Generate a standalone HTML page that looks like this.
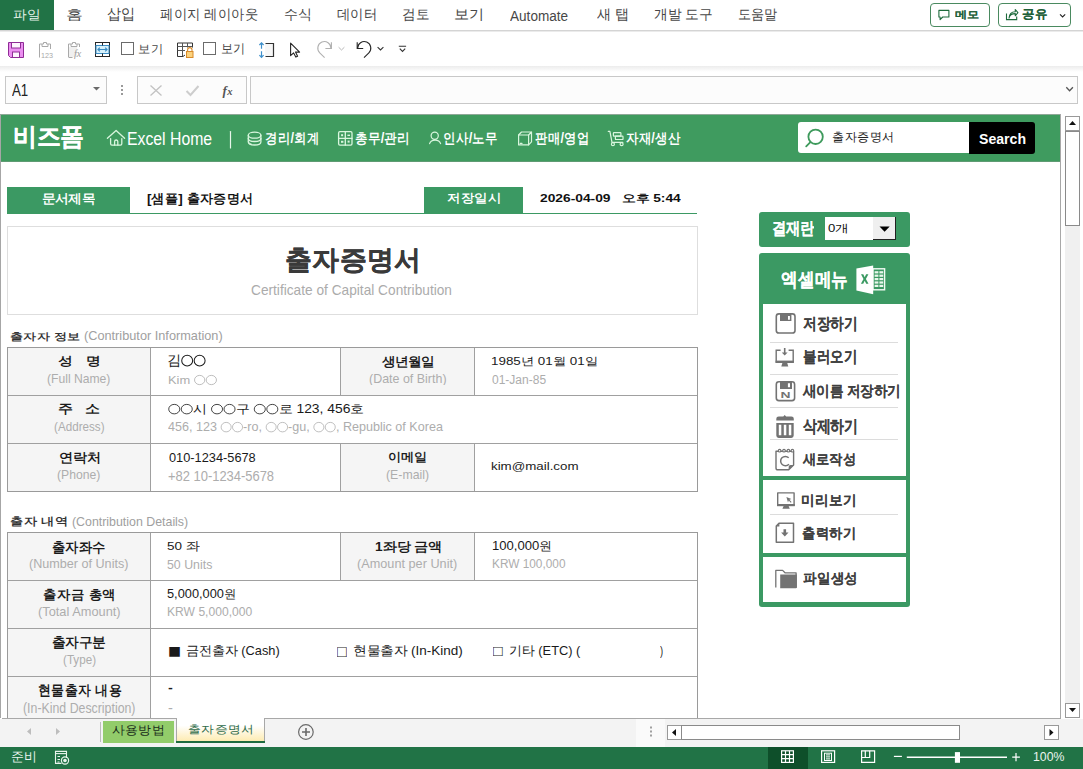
<!DOCTYPE html>
<html><head><meta charset="utf-8"><style>
html,body{margin:0;padding:0;width:1083px;height:769px;overflow:hidden;background:#fff;font-family:"Liberation Sans",sans-serif;position:relative}
</style></head><body>
<div style="position:absolute;left:0px;top:0px;width:54px;height:30px;background:#217346;"></div><div style="position:absolute;left:0px;top:30px;width:1083px;height:1px;background:#d4d4d4;"></div><div style="position:absolute;left:0px;top:31px;width:1083px;height:1px;background:#ebebeb;"></div><div style="position:absolute;left:0;top:66px;width:1083px;height:6px;background:linear-gradient(#ececec,#fff)"></div><div style="position:absolute;left:930px;top:3px;width:60px;height:24px;background:#fff;border:1px solid #4a8a60;box-sizing:border-box;border-radius:4px;"></div><div style="position:absolute;left:998px;top:3px;width:73px;height:24px;background:#fff;border:1px solid #4a8a60;box-sizing:border-box;border-radius:4px;"></div><div style="position:absolute;left:5px;top:76px;width:102px;height:28px;background:#fcfcfc;border:1px solid #c8c8c8;box-sizing:border-box;"></div><div style="position:absolute;left:137px;top:76px;width:110px;height:28px;background:#fcfcfc;border:1px solid #c8c8c8;box-sizing:border-box;"></div><div style="position:absolute;left:250px;top:76px;width:828px;height:28px;background:#fcfcfc;border:1px solid #c8c8c8;box-sizing:border-box;"></div><div style="position:absolute;left:0px;top:114px;width:1px;height:604px;background:#a6a6a6;"></div><div style="position:absolute;left:1px;top:114px;width:1059px;height:48px;background:#3f9b5f;"></div><div style="position:absolute;left:0px;top:114px;width:1060px;height:1px;background:#8fa898;"></div><div style="position:absolute;left:1px;top:161px;width:1059px;height:1px;background:#5f9b73;"></div><div style="position:absolute;left:1060px;top:114px;width:1px;height:604px;background:#a8a8a8;"></div><div style="position:absolute;left:2px;top:718px;width:1059px;height:1px;background:#a8a8a8;"></div><div style="position:absolute;left:1065px;top:116px;width:15px;height:602px;background:#f0f0f0;"></div><div style="position:absolute;left:1065px;top:116px;width:15px;height:15px;background:#fff;border:1px solid #999;box-sizing:border-box;"></div><div style="position:absolute;left:1065px;top:131px;width:15px;height:95px;background:#fff;border:1px solid #8a8a8a;box-sizing:border-box;"></div><div style="position:absolute;left:1065px;top:703px;width:15px;height:15px;background:#fff;border:1px solid #999;box-sizing:border-box;"></div><div style="position:absolute;left:0px;top:719px;width:1083px;height:28px;background:#f3f3f3;"></div><div style="position:absolute;left:0px;top:747px;width:1083px;height:22px;background:#217346;"></div><div style="position:absolute;left:636px;top:719px;width:29px;height:28px;background:#fafafa;"></div><div style="position:absolute;left:7px;top:187px;width:123px;height:26px;background:#3b9963;"></div><div style="position:absolute;left:424px;top:187px;width:99px;height:26px;background:#3b9963;"></div><div style="position:absolute;left:7px;top:213px;width:690px;height:1px;background:#3b9963;"></div><div style="position:absolute;left:7px;top:226px;width:691px;height:89px;background:#fff;border:1px solid #dedede;box-sizing:border-box;"></div><div style="position:absolute;left:7px;top:347px;width:691px;height:145px;background:#fff;border:1px solid #9a9a9a;box-sizing:border-box;"></div><div style="position:absolute;left:8px;top:348px;width:142px;height:143px;background:#f5f5f5;"></div><div style="position:absolute;left:341px;top:348px;width:133px;height:47px;background:#f5f5f5;"></div><div style="position:absolute;left:341px;top:444px;width:133px;height:47px;background:#f5f5f5;"></div><div style="position:absolute;left:8px;top:395px;width:689px;height:1px;background:#a0a0a0;"></div><div style="position:absolute;left:8px;top:443px;width:689px;height:1px;background:#a0a0a0;"></div><div style="position:absolute;left:150px;top:348px;width:1px;height:143px;background:#a0a0a0;"></div><div style="position:absolute;left:340px;top:348px;width:1px;height:47px;background:#a0a0a0;"></div><div style="position:absolute;left:474px;top:348px;width:1px;height:47px;background:#a0a0a0;"></div><div style="position:absolute;left:340px;top:444px;width:1px;height:47px;background:#a0a0a0;"></div><div style="position:absolute;left:474px;top:444px;width:1px;height:47px;background:#a0a0a0;"></div><div style="position:absolute;left:7px;top:532px;width:691px;height:186px;background:#fff;"></div><div style="position:absolute;left:7px;top:532px;width:1px;height:186px;background:#9a9a9a;"></div><div style="position:absolute;left:697px;top:532px;width:1px;height:186px;background:#9a9a9a;"></div><div style="position:absolute;left:7px;top:532px;width:691px;height:1px;background:#9a9a9a;"></div><div style="position:absolute;left:8px;top:533px;width:142px;height:185px;background:#f5f5f5;"></div><div style="position:absolute;left:341px;top:533px;width:133px;height:47px;background:#f5f5f5;"></div><div style="position:absolute;left:8px;top:580px;width:689px;height:1px;background:#a0a0a0;"></div><div style="position:absolute;left:8px;top:628px;width:689px;height:1px;background:#a0a0a0;"></div><div style="position:absolute;left:8px;top:676px;width:689px;height:1px;background:#a0a0a0;"></div><div style="position:absolute;left:150px;top:533px;width:1px;height:185px;background:#a0a0a0;"></div><div style="position:absolute;left:340px;top:533px;width:1px;height:47px;background:#a0a0a0;"></div><div style="position:absolute;left:474px;top:533px;width:1px;height:47px;background:#a0a0a0;"></div><div style="position:absolute;left:759px;top:212px;width:151px;height:35px;background:#3b9963;border-radius:3px;"></div><div style="position:absolute;left:825px;top:217px;width:48px;height:23px;background:#fff;"></div><div style="position:absolute;left:873px;top:217px;width:23px;height:23px;background:#efefef;border-right:1px solid #222;border-bottom:1px solid #222;box-sizing:border-box;"></div><div style="position:absolute;left:759px;top:253px;width:151px;height:354px;background:#3b9963;border-radius:3px;"></div><div style="position:absolute;left:763px;top:304px;width:143px;height:172px;background:#fff;"></div><div style="position:absolute;left:763px;top:480px;width:143px;height:73px;background:#fff;"></div><div style="position:absolute;left:763px;top:557px;width:143px;height:45px;background:#fff;"></div><div style="position:absolute;left:770px;top:342px;width:128px;height:1px;background:#dcdcdc;"></div><div style="position:absolute;left:770px;top:374px;width:128px;height:1px;background:#dcdcdc;"></div><div style="position:absolute;left:770px;top:407px;width:128px;height:1px;background:#dcdcdc;"></div><div style="position:absolute;left:770px;top:439px;width:128px;height:1px;background:#dcdcdc;"></div><div style="position:absolute;left:770px;top:514px;width:128px;height:1px;background:#dcdcdc;"></div><div style="position:absolute;left:103px;top:721px;width:71px;height:22px;background:#92cc6a;"></div><div style="position:absolute;left:176px;top:718px;width:89px;height:25px;box-sizing:border-box;border-left:1px solid #a8a8a8;border-right:1px solid #a8a8a8;background:linear-gradient(#fff 30%,#fde9a8)"></div><div style="position:absolute;left:176px;top:741px;width:89px;height:2px;background:#1e6b3f;"></div><div style="position:absolute;left:100px;top:722px;width:1px;height:20px;background:#bdbdbd;"></div><div style="position:absolute;left:667px;top:725px;width:15px;height:15px;background:#fff;border:1px solid #999;box-sizing:border-box;"></div><div style="position:absolute;left:681px;top:725px;width:279px;height:15px;background:#fff;border:1px solid #8a8a8a;box-sizing:border-box;"></div><div style="position:absolute;left:1044px;top:725px;width:15px;height:15px;background:#fff;border:1px solid #999;box-sizing:border-box;"></div><div style="position:absolute;left:768px;top:747px;width:40px;height:22px;background:#0e4f2a;"></div><!-- ribbon buttons icons -->
<svg style="position:absolute;left:0;top:0" width="1083" height="769" viewBox="0 0 1083 769">
<g fill="none" stroke="#1e6b3c" stroke-width="1.1">
 <path d="M938.9 10.4h10v6.6h-6.2l-2.6 2.6v-2.6h-1.2z" stroke-linejoin="round"/>
 <path d="M1006.5 13.5v6.1h10.2v-3.2"/>
 <path d="M1009 18.2c0.5-3.2 2.4-4.6 6.3-4.6v2.2l2.6-3.2-2.6-3.1v2.2c-4.1 0-6 2.4-6.3 6.5z" stroke-linejoin="round"/>
 <path d="M1060 14.3l2.6 2.6 2.6-2.6" stroke="#222" stroke-width="1.1"/>
</g>
<!-- QAT save -->
<path d="M8.5 42.5h15v15h-13l-2-2z" fill="#eb8ff0" stroke="#8f2c96" stroke-width="1"/>
<rect x="11.5" y="42.5" width="9" height="5.5" fill="#fdf3fd" stroke="#8f2c96" stroke-width="1"/>
<rect x="12.5" y="52" width="7" height="5.5" fill="#fdf3fd" stroke="#8f2c96" stroke-width="1"/>
<!-- paste values -->
<g fill="none" stroke="#a9a9a9" stroke-width="1">
 <path d="M39.5 57.5v-13.5h2.5M48 44h2.5v5"/>
 <path d="M42 46.5h6v-2.5h-1.5v-1.5h-3v1.5h-1.5z"/>
</g>
<text x="41" y="57.6" font-family="Liberation Sans" font-size="7.6" fill="#a9a9a9" textLength="12" lengthAdjust="spacingAndGlyphs">123</text>
<!-- paste formula -->
<g fill="none" stroke="#a9a9a9" stroke-width="1">
 <path d="M68.5 57.5v-13.5h2.5M77 44h2.5v3"/>
 <path d="M71 46.5h6v-2.5h-1.5v-1.5h-3v1.5h-1.5z"/>
 <path d="M69 57.5h3.5"/>
</g>
<rect x="69" y="47" width="8" height="10" fill="#f0f0f0"/>
<text x="74" y="57" font-family="Liberation Serif" font-style="italic" font-size="10" fill="#9a9a9a">fx</text>
<!-- column width -->
<rect x="95.5" y="42.5" width="14" height="14" fill="#fff" stroke="#262626" stroke-width="1"/>
<rect x="96" y="45.5" width="13" height="8" fill="#d7f1fb" stroke="#3a8cc4" stroke-width="1"/>
<path d="M102.5 43v2.5M102.5 53.5v3" stroke="#262626" stroke-width="1"/>
<path d="M98 49.5h9M99.8 47.7l-1.8 1.8 1.8 1.8M105.2 47.7l1.8 1.8-1.8 1.8" fill="none" stroke="#3a8cc4" stroke-width="1.2"/>
<!-- checkboxes -->
<rect x="121.5" y="42.5" width="12" height="12" fill="#fff" stroke="#6b6b6b" stroke-width="1"/>
<rect x="203.5" y="42.5" width="12" height="12" fill="#fff" stroke="#6b6b6b" stroke-width="1"/>
<!-- table lock -->
<g fill="none" stroke="#333" stroke-width="1">
 <path d="M177.5 56.5v-13.5h15v4.5"/>
 <path d="M177.5 56.5h5.5l2-1.5"/>
 <path d="M177.5 46.5h15M177.5 50.5h7.5M182.5 43v13M187.5 43v4.5" stroke="#555"/>
</g>
<path d="M187.6 51v-1.2a2.2 2.2 0 0 1 4.4 0v1.2" fill="none" stroke="#d88a2a" stroke-width="1.1"/>
<rect x="186.5" y="51.5" width="6.5" height="6" fill="#fcd27c" stroke="#d88a2a" stroke-width="1"/>
<!-- row height -->
<rect x="265" y="43.5" width="8.5" height="13" fill="#f7f7f7"/>
<path d="M265.5 43.5h8v13h-8" fill="none" stroke="#333" stroke-width="1.2"/>
<path d="M261.5 42.8v6M261.5 51.2v6M259.4 45l2.1-2.1 2.1 2.1M259.4 55.2l2.1 2.1 2.1-2.1" fill="none" stroke="#3d8fcb" stroke-width="1.2"/>
<!-- cursor -->
<path d="M290.6 43.2v12.5l3-2.8 2.2 4.2 1.8-0.9-2.1-4.1h4.1z" fill="#fff" stroke="#262626" stroke-width="1.1" stroke-linejoin="round"/>
<!-- redo -->
<path d="M331 48.2A6.6 6.6 0 1 0 319.73 52.87L324.6 57.6" fill="none" stroke="#b0b0b0" stroke-width="1.1"/>
<path d="M331.4 42.3v6.2h-6" fill="none" stroke="#b0b0b0" stroke-width="1.1"/>
<path d="M338.6 47.2l2.9 2.8 2.9-2.8" fill="none" stroke="#b8b8b8" stroke-width="1"/>
<!-- undo -->
<path d="M357.6 48.2A6.6 6.6 0 1 1 368.87 52.87L364 57.6" fill="none" stroke="#262626" stroke-width="1.1"/>
<path d="M357.2 42.3v6.2h6" fill="none" stroke="#262626" stroke-width="1.1"/>
<path d="M377.6 47.2l2.9 2.8 2.9-2.8" fill="none" stroke="#333" stroke-width="1.1"/>
<!-- customize -->
<path d="M398.8 46.3h7.3M399.8 48.6l2.7 2.8 2.7-2.8" fill="none" stroke="#333" stroke-width="1.1"/>
<!-- name box arrow -->
<path d="M93 87h7l-3.5 3.6z" fill="#6a6a6a"/>
<!-- dots -->
<g fill="#9a9a9a"><rect x="121" y="85" width="2" height="2"/><rect x="121" y="89" width="2" height="2"/><rect x="121" y="93" width="2" height="2"/></g>
<!-- X check fx -->
<path d="M150.5 85.5l11 10M161.5 85.5l-11 10" stroke="#c2c2c2" stroke-width="1.3"/>
<path d="M186.5 91l4 4 8-9" fill="none" stroke="#cdcdcd" stroke-width="2"/>
<text x="222.5" y="94.5" font-family="Liberation Serif" font-style="italic" font-weight="bold" font-size="13" fill="#555">f</text>
<text x="227.2" y="95" font-family="Liberation Serif" font-style="italic" font-weight="bold" font-size="10.5" fill="#555">x</text>
<!-- formula chevron -->
<path d="M1066.3 87.3l3.3 3.5 3.3-3.5" fill="none" stroke="#555" stroke-width="1.3"/>
</svg>
<svg style="position:absolute;left:0;top:0" width="1083" height="769" viewBox="0 0 1083 769">
<g fill="none" stroke="#d9f6de" stroke-width="1.3" stroke-linecap="round" stroke-linejoin="round">
 <!-- house -->
 <path d="M107.4 138.3L116.1 130.4L124.6 138.3"/>
 <path d="M110.6 138.6v5.2a1.3 1.3 0 0 0 1.3 1.3h8.6a1.3 1.3 0 0 0 1.3-1.3v-5.2"/>
 <path d="M114.6 145v-3.4a1.6 1.6 0 0 1 3.2 0v3.4"/>
 <!-- separator -->
 <path d="M230.5 131.5v16.5" stroke="#e8f6ea" stroke-width="1.2"/>
 <!-- db -->
 <ellipse cx="254.6" cy="135.2" rx="6.3" ry="3"/>
 <path d="M248.3 135.2v6.8c0 1.7 2.8 3 6.3 3s6.3-1.3 6.3-3v-6.8"/>
 <path d="M248.3 138.5c0 1.7 2.8 3 6.3 3s6.3-1.3 6.3-3" />
 <path d="M248.3 141.7c0 1.0 1.3 1.8 3 2.3" stroke-width="1"/>
 <!-- grid -->
 <rect x="338.6" y="131.7" width="13.4" height="13.4" rx="1.3"/>
 <path d="M345.3 132v13M339 138.4h13"/>
</g>
<g fill="#d9f6de">
 <rect x="341.1" y="134.2" width="2" height="2"/>
 <rect x="347.4" y="134.6" width="2.6" height="1.4"/>
 <rect x="341.0" y="140.8" width="2.4" height="2"/>
 <rect x="347.6" y="140.6" width="2" height="2"/>
</g>
<g fill="none" stroke="#d9f6de" stroke-width="1.2" stroke-linecap="round" stroke-linejoin="round">
 <!-- person -->
 <circle cx="434.7" cy="135.7" r="3.6"/>
 <path d="M429.6 143.6a5.7 4.8 0 0 1 11 0"/>
 <!-- box -->
 <path d="M518.6 135h10v9.9h-10z"/>
 <path d="M518.6 135l2.9-3h10v9.9l-2.9 3M528.6 135l2.9-3"/>
 <path d="M520.2 143.4h1.8"/>
 <!-- cart -->
 <path d="M608.3 131.4h1.6l2.1 10.9h10.8"/>
 <rect x="613.4" y="132.7" width="7.5" height="3.5" rx="0.6"/>
 <rect x="615.4" y="136.2" width="7.6" height="3.3" rx="0.6"/>
 <circle cx="612.9" cy="144.2" r="1.5"/>
 <circle cx="621.6" cy="144.2" r="1.5"/>
</g>
</svg>
<!-- search box -->
<div style="position:absolute;left:798px;top:122px;width:172px;height:31px;background:#fff;border-radius:3px 0 0 3px"></div>
<div style="position:absolute;left:969px;top:122px;width:66px;height:32px;background:#000;border-radius:0 3px 3px 0"></div>
<svg style="position:absolute;left:0;top:0" width="1083" height="769" viewBox="0 0 1083 769">
 <circle cx="815.6" cy="136.8" r="7.2" fill="none" stroke="#3e9a5c" stroke-width="1.8"/>
 <path d="M810.4 142.2l-4.2 4.2" stroke="#3e9a5c" stroke-width="1.8" stroke-linecap="round"/>
</svg>
<svg style="position:absolute;left:0;top:0" width="1083" height="769" viewBox="0 0 1083 769">
 <!-- dropdown arrow -->
 <path d="M879.5 226.6h10.2l-5.1 5.2z" fill="#000"/>
 <!-- excel logo -->
 <rect x="873" y="268.8" width="11.6" height="21" fill="none" stroke="#f2fbf4" stroke-width="1.4"/>
 <g fill="#e9f7ec">
  <rect x="874.6" y="271.2" width="3.8" height="2.2"/><rect x="879.4" y="271.2" width="3.8" height="2.2"/>
  <rect x="874.6" y="274.6" width="3.8" height="2.2"/><rect x="879.4" y="274.6" width="3.8" height="2.2"/>
  <rect x="874.6" y="278.0" width="3.8" height="2.2"/><rect x="879.4" y="278.0" width="3.8" height="2.2"/>
  <rect x="874.6" y="281.4" width="3.8" height="2.2"/><rect x="879.4" y="281.4" width="3.8" height="2.2"/>
  <rect x="874.6" y="284.8" width="3.8" height="2.2"/><rect x="879.4" y="284.8" width="3.8" height="2.2"/>
 </g>
 <path d="M856.4 268.6L873.2 265.6V294.2L856.4 290.4z" fill="#fff"/>
 <path d="M861 274.3h2.3l1.4 2.9 1.4-2.9h2.3l-2.5 4.6 2.6 4.8h-2.3l-1.5-3-1.5 3h-2.3l2.6-4.8z" fill="#3b9a62"/>
 <!-- menu icons -->
 <g fill="none" stroke="#737373" stroke-width="1.6">
  <rect x="776.3" y="313.9" width="18.7" height="19.1" rx="2.6"/>
  <rect x="776.3" y="381.8" width="18.3" height="18.8" rx="2.6"/>
 </g>
 <path d="M780 313.5h11.4v7.5H780z M788 316v3.8h1.9V316z" fill="#737373" fill-rule="evenodd"/>
 <path d="M780 381.2h12v7.7h-12z M787.9 383.2v4h2.1v-4z" fill="#737373" fill-rule="evenodd"/>
 <text x="780.4" y="398.2" font-family="Liberation Sans" font-weight="bold" font-size="8.8" fill="#737373" textLength="10" lengthAdjust="spacingAndGlyphs">N</text>
 <!-- load monitor -->
 <path d="M780.6 350.2h-4.4v12h17v-12h-4.6" fill="none" stroke="#737373" stroke-width="1.4"/>
 <rect x="775.6" y="360.6" width="18.2" height="2" fill="#737373"/>
 <path d="M781.3 366.4l1.2-4h4.6l1.2 4z" fill="#737373"/>
 <path d="M784.7 348v5" stroke="#737373" stroke-width="1.6"/>
 <path d="M781.8 352.4h5.8l-2.9 3.2z" fill="#737373"/>
 <!-- trash -->
 <path d="M776.3 420.6v-1.8a2.4 2.4 0 0 1 2.4-2.4h4.6l1.4-1.3 1.4 1.3h5.3a2.4 2.4 0 0 1 2.4 2.4v1.8z" fill="#737373"/>
 <path d="M776.3 423h17.4v12.6a2.4 2.4 0 0 1-2.4 2.4h-12.6a2.4 2.4 0 0 1-2.4-2.4z M778.8 424.8v10.4h2.5v-10.4z M783.8 424.8v10.4h2.5v-10.4z M788.8 424.8v10.4h2.5v-10.4z" fill="#737373" fill-rule="evenodd"/>
 <!-- new doc -->
 <path d="M776 451.3h17.6v13.6l-4.9 4.9h-10.8a1.9 1.9 0 0 1-1.9-1.9z" fill="none" stroke="#737373" stroke-width="1.4" stroke-linejoin="round"/>
 <path d="M793.6 464.9l-4.9 4.9v-3a1.9 1.9 0 0 1 1.9-1.9z" fill="#737373"/>
 <g fill="#fff" stroke="#737373" stroke-width="1.1"><circle cx="779.6" cy="450.7" r="1.3"/><circle cx="784" cy="450.7" r="1.3"/><circle cx="788.4" cy="450.7" r="1.3"/><circle cx="792.4" cy="450.7" r="1.3"/></g>
 <path d="M788.7 457.8a4.7 4.7 0 1 0 0.2 6.4" fill="none" stroke="#737373" stroke-width="1.5"/>
 <!-- preview monitor -->
 <path d="M777.7 492.9h16.4v12.3h-16.4z" fill="none" stroke="#737373" stroke-width="1.4" stroke-linejoin="round"/>
 <rect x="777" y="504" width="17.8" height="2.2" fill="#737373"/>
 <path d="M782.4 508.8l1.2-2.8h5l1.2 2.8z" fill="#737373"/>
 <path d="M786.4 497l5 2.1-2 0.7 2.2 2.1-0.8 0.8-2.1-2.2-0.7 2z" fill="#737373"/>
 <!-- print doc -->
 <path d="M779 523.3h14.5v18.9h-17.2v-16.2z" fill="none" stroke="#737373" stroke-width="1.5" stroke-linejoin="round"/>
 <path d="M776 526.6l3.4-3.4v3.4z" fill="#737373"/>
 <path d="M783.5 529.2h2.6v3.4h2.4l-3.7 4-3.7-4h2.4z" fill="#737373"/>
 <!-- folder -->
 <path d="M775.8 587.6v-17.2h6.8l2.4 2.4h11.1v15" fill="none" stroke="#737373" stroke-width="1.3" stroke-linejoin="round"/>
 <path d="M780.2 574.4h16.7v12.8a1 1 0 0 1-1 1h-15.7z" fill="#737373"/>
</svg>
<svg style="position:absolute;left:0;top:0" width="1083" height="769" viewBox="0 0 1083 769">
 <!-- v scroll arrows -->
 <path d="M1069 125h7l-3.5-4z" fill="#111"/>
 <path d="M1069 708h7l-3.5 4z" fill="#111"/>
 <!-- h scroll arrows -->
 <path d="M672 732.5l4-3.5v7z" fill="#111"/>
 <path d="M1053.5 732.5l-4-3.5v7z" fill="#111"/>
 <!-- tab nav arrows -->
 <path d="M27 731.5l4-3.5v7z" fill="#bdbdbd"/>
 <path d="M60 731.5l-4-3.5v7z" fill="#bdbdbd"/>
 <!-- plus circle -->
 <circle cx="305.9" cy="732" r="7.3" fill="none" stroke="#6a6a6a" stroke-width="1.2"/>
 <path d="M302 732h8M306 728v8" stroke="#6a6a6a" stroke-width="1.6"/>
 <!-- dots -->
 <g fill="#a0a0a0"><rect x="650" y="726.5" width="2" height="2"/><rect x="650" y="730.5" width="2" height="2"/><rect x="650" y="734.5" width="2" height="2"/></g>
 <!-- macro icon -->
 <g fill="none" stroke="#e8f4ec" stroke-width="1.1">
  <path d="M66.5 758v-6.6h-11v12h6"/>
  <path d="M55.5 753.6h11"/>
  <path d="M57.5 756.5h2.5M57.5 759.5h2.5M57.5 762h2"/>
 </g>
 <circle cx="65" cy="760.5" r="3.6" fill="none" stroke="#e8f4ec" stroke-width="1.2"/>
 <circle cx="65" cy="760.5" r="1.8" fill="#e8f4ec"/>
 <!-- view icons -->
 <g fill="none" stroke="#fff" stroke-width="1.2">
  <rect x="781.6" y="750.8" width="11.8" height="11.6"/>
  <path d="M785.5 750.8v11.6M789.5 750.8v11.6M781.6 754.7h11.8M781.6 758.6h11.8"/>
  <rect x="821.6" y="750.8" width="13" height="11.6"/>
  <rect x="824.5" y="753.2" width="7" height="7.3" stroke-width="1"/>
  <path d="M826 754.9h4M826 756.9h4M826 758.9h4" stroke-width="1"/>
  <path d="M861.6 750.8h13v11.6h-13z"/>
  <path d="M861.6 757.5h8.1v-6.7M865.3 750.8v6.7"/>
  <path d="M893.9 756.4h8"/>
  <path d="M906.8 757.3h100.2" stroke-width="1.5"/>
  <path d="M1012.2 757.1h7.7M1016 753v8.2"/>
 </g>
 <rect x="954.9" y="752.1" width="5.1" height="10.7" fill="#fff"/>
</svg>
<div style="position:absolute;left:13.17px;top:8.08px;font-size:52.73px;line-height:52.73px;white-space:pre;font-weight:400;color:#e8f3ec;transform:scale(0.26341,0.25);transform-origin:0 0;">파일</div><div style="position:absolute;left:65.52px;top:8.04px;font-size:53.19px;line-height:53.19px;white-space:pre;font-weight:400;color:#474747;transform:scale(0.32497,0.25);transform-origin:0 0;">홈</div><div style="position:absolute;left:107.41px;top:6.44px;font-size:59.13px;line-height:59.13px;white-space:pre;font-weight:400;color:#474747;transform:scale(0.23655,0.25);transform-origin:0 0;">삽입</div><div style="position:absolute;left:160.46px;top:6.96px;font-size:57.17px;line-height:57.17px;white-space:pre;font-weight:400;color:#474747;transform:scale(0.23701,0.25);transform-origin:0 0;">페이지 레이아웃</div><div style="position:absolute;left:283.86px;top:6.67px;font-size:57.15px;line-height:57.15px;white-space:pre;font-weight:400;color:#474747;transform:scale(0.24854,0.25);transform-origin:0 0;">수식</div><div style="position:absolute;left:337.20px;top:7.30px;font-size:55.91px;line-height:55.91px;white-space:pre;font-weight:400;color:#474747;transform:scale(0.23805,0.25);transform-origin:0 0;">데이터</div><div style="position:absolute;left:402.41px;top:7.30px;font-size:55.91px;line-height:55.91px;white-space:pre;font-weight:400;color:#474747;transform:scale(0.24302,0.25);transform-origin:0 0;">검토</div><div style="position:absolute;left:453.77px;top:7.39px;font-size:55.61px;line-height:55.61px;white-space:pre;font-weight:400;color:#474747;transform:scale(0.27005,0.25);transform-origin:0 0;">보기</div><div style="position:absolute;left:510.00px;top:8.50px;font-size:57.14px;line-height:57.14px;white-space:pre;font-weight:400;color:#474747;transform:scale(0.23774,0.25);transform-origin:0 0;">Automate</div><div style="position:absolute;left:597.22px;top:7.30px;font-size:55.91px;line-height:55.91px;white-space:pre;font-weight:400;color:#474747;transform:scale(0.25311,0.25);transform-origin:0 0;">새 탭</div><div style="position:absolute;left:654.45px;top:7.39px;font-size:55.61px;line-height:55.61px;white-space:pre;font-weight:400;color:#474747;transform:scale(0.24563,0.25);transform-origin:0 0;">개발 도구</div><div style="position:absolute;left:738.45px;top:7.30px;font-size:55.91px;line-height:55.91px;white-space:pre;font-weight:400;color:#474747;transform:scale(0.23437,0.25);transform-origin:0 0;">도움말</div><div style="position:absolute;left:955.11px;top:9.94px;font-size:38.40px;line-height:38.40px;white-space:pre;font-weight:700;color:#1e5f38;transform:scale(0.30363,0.25);transform-origin:0 0;-webkit-text-stroke:.014em currentColor;">메모</div><div style="position:absolute;left:1021.84px;top:7.75px;font-size:49.77px;line-height:49.77px;white-space:pre;font-weight:700;color:#1e5f38;transform:scale(0.25958,0.25);transform-origin:0 0;-webkit-text-stroke:.014em currentColor;">공유</div><div style="position:absolute;left:138.40px;top:42.77px;font-size:48.58px;line-height:48.58px;white-space:pre;font-weight:400;color:#474747;transform:scale(0.25545,0.25);transform-origin:0 0;">보기</div><div style="position:absolute;left:221.05px;top:41.57px;font-size:51.71px;line-height:51.71px;white-space:pre;font-weight:400;color:#474747;transform:scale(0.23220,0.25);transform-origin:0 0;">보기</div><div style="position:absolute;left:12.15px;top:82.46px;font-size:64.02px;line-height:64.02px;white-space:pre;font-weight:400;color:#222;transform:scale(0.20684,0.25);transform-origin:0 0;">A1</div><div style="position:absolute;left:13.10px;top:124.22px;font-size:99.45px;line-height:99.45px;white-space:pre;font-weight:700;color:#ffffff;transform:scale(0.23908,0.25);transform-origin:0 0;-webkit-text-stroke:.014em currentColor;">비즈폼</div><div style="position:absolute;left:127.24px;top:129.83px;font-size:72.22px;line-height:72.22px;white-space:pre;font-weight:400;color:#ffffff;transform:scale(0.21875,0.25);transform-origin:0 0;">Excel Home</div><div style="position:absolute;left:264.74px;top:131.04px;font-size:57.83px;line-height:57.83px;white-space:pre;font-weight:700;color:#ffffff;transform:scale(0.21975,0.25);transform-origin:0 0;">경리/회계</div><div style="position:absolute;left:355.01px;top:130.87px;font-size:57.20px;line-height:57.20px;white-space:pre;font-weight:700;color:#ffffff;transform:scale(0.22547,0.25);transform-origin:0 0;">총무/관리</div><div style="position:absolute;left:442.62px;top:131.04px;font-size:57.83px;line-height:57.83px;white-space:pre;font-weight:700;color:#ffffff;transform:scale(0.22120,0.25);transform-origin:0 0;">인사/노무</div><div style="position:absolute;left:535.29px;top:131.04px;font-size:57.83px;line-height:57.83px;white-space:pre;font-weight:700;color:#ffffff;transform:scale(0.22017,0.25);transform-origin:0 0;">판매/영업</div><div style="position:absolute;left:626.14px;top:130.98px;font-size:56.64px;line-height:56.64px;white-space:pre;font-weight:700;color:#ffffff;transform:scale(0.22233,0.25);transform-origin:0 0;">자재/생산</div><div style="position:absolute;left:831.84px;top:130.95px;font-size:49.66px;line-height:49.66px;white-space:pre;font-weight:400;color:#222;transform:scale(0.25066,0.25);transform-origin:0 0;">출자증명서</div><div style="position:absolute;left:978.98px;top:131.80px;font-size:55.15px;line-height:55.15px;white-space:pre;font-weight:700;color:#ffffff;transform:scale(0.25577,0.25);transform-origin:0 0;">Search</div><div style="position:absolute;left:41.90px;top:191.99px;font-size:50.43px;line-height:50.43px;white-space:pre;font-weight:700;color:#ffffff;transform:scale(0.26420,0.25);transform-origin:0 0;">문서제목</div><div style="position:absolute;left:147.19px;top:192.20px;font-size:53.06px;line-height:53.06px;white-space:pre;font-weight:700;color:#111;transform:scale(0.25333,0.25);transform-origin:0 0;">[샘플] 출자증명서</div><div style="position:absolute;left:447.45px;top:192.02px;font-size:48.92px;line-height:48.92px;white-space:pre;font-weight:700;color:#ffffff;transform:scale(0.27937,0.25);transform-origin:0 0;">저장일시</div><div style="position:absolute;left:539.55px;top:193.03px;font-size:43.48px;line-height:43.48px;white-space:pre;font-weight:700;color:#111;transform:scale(0.31721,0.25);transform-origin:0 0;">2026-04-09   오후 5:44</div><div style="position:absolute;left:285.15px;top:246.13px;font-size:109.70px;line-height:109.70px;white-space:pre;font-weight:700;color:#3a3a3a;transform:scale(0.24873,0.25);transform-origin:0 0;-webkit-text-stroke:.014em currentColor;">출자증명서</div><div style="position:absolute;left:251.18px;top:282.89px;font-size:57.61px;line-height:57.61px;white-space:pre;font-weight:400;color:#ababab;transform:scale(0.23774,0.25);transform-origin:0 0;">Certificate of Capital Contribution</div><div style="position:absolute;left:10.28px;top:331.38px;font-size:41.34px;line-height:41.34px;white-space:pre;font-weight:700;color:#333;transform:scale(0.32696,0.25);transform-origin:0 0;">출자자 정보</div><div style="position:absolute;left:84.23px;top:328.89px;font-size:53.64px;line-height:53.64px;white-space:pre;font-weight:400;color:#a0a0a0;transform:scale(0.23736,0.25);transform-origin:0 0;">(Contributor Information)</div><div style="position:absolute;left:58.09px;top:354.72px;font-size:49.13px;line-height:49.13px;white-space:pre;font-weight:700;color:#1a1a1a;transform:scale(0.30837,0.25);transform-origin:0 0;">성   명</div><div style="position:absolute;left:46.95px;top:371.68px;font-size:50.33px;line-height:50.33px;white-space:pre;font-weight:400;color:#adadad;transform:scale(0.24103,0.25);transform-origin:0 0;">(Full Name)</div><div style="position:absolute;left:57.81px;top:402.16px;font-size:51.36px;line-height:51.36px;white-space:pre;font-weight:700;color:#1a1a1a;transform:scale(0.28846,0.25);transform-origin:0 0;">주   소</div><div style="position:absolute;left:54.30px;top:420.39px;font-size:50.55px;line-height:50.55px;white-space:pre;font-weight:400;color:#adadad;transform:scale(0.23081,0.25);transform-origin:0 0;">(Address)</div><div style="position:absolute;left:58.88px;top:450.67px;font-size:51.30px;line-height:51.30px;white-space:pre;font-weight:700;color:#1a1a1a;transform:scale(0.27344,0.25);transform-origin:0 0;">연락처</div><div style="position:absolute;left:57.27px;top:468.39px;font-size:50.55px;line-height:50.55px;white-space:pre;font-weight:400;color:#adadad;transform:scale(0.24154,0.25);transform-origin:0 0;">(Phone)</div><div style="position:absolute;left:382.00px;top:354.97px;font-size:50.05px;line-height:50.05px;white-space:pre;font-weight:700;color:#1a1a1a;transform:scale(0.26282,0.25);transform-origin:0 0;">생년월일</div><div style="position:absolute;left:368.75px;top:372.36px;font-size:49.42px;line-height:49.42px;white-space:pre;font-weight:400;color:#adadad;transform:scale(0.25210,0.25);transform-origin:0 0;">(Date of Birth)</div><div style="position:absolute;left:387.95px;top:451.12px;font-size:48.39px;line-height:48.39px;white-space:pre;font-weight:700;color:#1a1a1a;transform:scale(0.27329,0.25);transform-origin:0 0;">이메일</div><div style="position:absolute;left:386.07px;top:468.27px;font-size:53.09px;line-height:53.09px;white-space:pre;font-weight:400;color:#adadad;transform:scale(0.23188,0.25);transform-origin:0 0;">(E-mail)</div><div style="position:absolute;left:167.21px;top:353.91px;font-size:54.67px;line-height:54.67px;white-space:pre;font-weight:400;color:#1a1a1a;transform:scale(0.25391,0.25);transform-origin:0 0;">김<span style="display:inline-block;width:.86em;height:.86em;border:.08em solid currentColor;border-radius:50%;box-sizing:border-box;vertical-align:-.1em;margin:0 .02em"></span><span style="display:inline-block;width:.86em;height:.86em;border:.08em solid currentColor;border-radius:50%;box-sizing:border-box;vertical-align:-.1em;margin:0 .02em"></span></div><div style="position:absolute;left:167.57px;top:374.07px;font-size:46.51px;line-height:46.51px;white-space:pre;font-weight:400;color:#adadad;transform:scale(0.27776,0.25);transform-origin:0 0;">Kim <span style="display:inline-block;width:.86em;height:.86em;border:.08em solid currentColor;border-radius:50%;box-sizing:border-box;vertical-align:-.1em;margin:0 .02em"></span><span style="display:inline-block;width:.86em;height:.86em;border:.08em solid currentColor;border-radius:50%;box-sizing:border-box;vertical-align:-.1em;margin:0 .02em"></span></div><div style="position:absolute;left:168.40px;top:402.89px;font-size:47.72px;line-height:47.72px;white-space:pre;font-weight:400;color:#1a1a1a;transform:scale(0.29094,0.25);transform-origin:0 0;"><span style="display:inline-block;width:.86em;height:.86em;border:.08em solid currentColor;border-radius:50%;box-sizing:border-box;vertical-align:-.1em;margin:0 .02em"></span><span style="display:inline-block;width:.86em;height:.86em;border:.08em solid currentColor;border-radius:50%;box-sizing:border-box;vertical-align:-.1em;margin:0 .02em"></span>시 <span style="display:inline-block;width:.86em;height:.86em;border:.08em solid currentColor;border-radius:50%;box-sizing:border-box;vertical-align:-.1em;margin:0 .02em"></span><span style="display:inline-block;width:.86em;height:.86em;border:.08em solid currentColor;border-radius:50%;box-sizing:border-box;vertical-align:-.1em;margin:0 .02em"></span>구 <span style="display:inline-block;width:.86em;height:.86em;border:.08em solid currentColor;border-radius:50%;box-sizing:border-box;vertical-align:-.1em;margin:0 .02em"></span><span style="display:inline-block;width:.86em;height:.86em;border:.08em solid currentColor;border-radius:50%;box-sizing:border-box;vertical-align:-.1em;margin:0 .02em"></span>로 123, 456호</div><div style="position:absolute;left:168.35px;top:421.35px;font-size:47.50px;line-height:47.50px;white-space:pre;font-weight:400;color:#adadad;transform:scale(0.26489,0.25);transform-origin:0 0;">456, 123 <span style="display:inline-block;width:.86em;height:.86em;border:.08em solid currentColor;border-radius:50%;box-sizing:border-box;vertical-align:-.1em;margin:0 .02em"></span><span style="display:inline-block;width:.86em;height:.86em;border:.08em solid currentColor;border-radius:50%;box-sizing:border-box;vertical-align:-.1em;margin:0 .02em"></span>-ro, <span style="display:inline-block;width:.86em;height:.86em;border:.08em solid currentColor;border-radius:50%;box-sizing:border-box;vertical-align:-.1em;margin:0 .02em"></span><span style="display:inline-block;width:.86em;height:.86em;border:.08em solid currentColor;border-radius:50%;box-sizing:border-box;vertical-align:-.1em;margin:0 .02em"></span>-gu, <span style="display:inline-block;width:.86em;height:.86em;border:.08em solid currentColor;border-radius:50%;box-sizing:border-box;vertical-align:-.1em;margin:0 .02em"></span><span style="display:inline-block;width:.86em;height:.86em;border:.08em solid currentColor;border-radius:50%;box-sizing:border-box;vertical-align:-.1em;margin:0 .02em"></span>, Republic of Korea</div><div style="position:absolute;left:168.73px;top:451.02px;font-size:53.22px;line-height:53.22px;white-space:pre;font-weight:400;color:#1a1a1a;transform:scale(0.24023,0.25);transform-origin:0 0;">010-1234-5678</div><div style="position:absolute;left:168.08px;top:469.00px;font-size:57.14px;line-height:57.14px;white-space:pre;font-weight:400;color:#adadad;transform:scale(0.22629,0.25);transform-origin:0 0;">+82 10-1234-5678</div><div style="position:absolute;left:491.23px;top:355.60px;font-size:44.19px;line-height:44.19px;white-space:pre;font-weight:400;color:#1a1a1a;transform:scale(0.30282,0.25);transform-origin:0 0;">1985년 01월 01일</div><div style="position:absolute;left:492.43px;top:373.51px;font-size:48.86px;line-height:48.86px;white-space:pre;font-weight:400;color:#adadad;transform:scale(0.24590,0.25);transform-origin:0 0;">01-Jan-85</div><div style="position:absolute;left:490.80px;top:461.22px;font-size:44.32px;line-height:44.32px;white-space:pre;font-weight:400;color:#1a1a1a;transform:scale(0.30058,0.25);transform-origin:0 0;">kim@mail.com</div><div style="position:absolute;left:9.98px;top:514.83px;font-size:45.52px;line-height:45.52px;white-space:pre;font-weight:700;color:#333;transform:scale(0.29990,0.25);transform-origin:0 0;">출자 내역</div><div style="position:absolute;left:71.90px;top:514.84px;font-size:54.47px;line-height:54.47px;white-space:pre;font-weight:400;color:#a0a0a0;transform:scale(0.22708,0.25);transform-origin:0 0;">(Contribution Details)</div><div style="position:absolute;left:51.88px;top:540.22px;font-size:56.22px;line-height:56.22px;white-space:pre;font-weight:700;color:#1a1a1a;transform:scale(0.23809,0.25);transform-origin:0 0;">출자좌수</div><div style="position:absolute;left:29.44px;top:558.04px;font-size:48.70px;line-height:48.70px;white-space:pre;font-weight:400;color:#adadad;transform:scale(0.25881,0.25);transform-origin:0 0;">(Number of Units)</div><div style="position:absolute;left:43.37px;top:588.00px;font-size:53.62px;line-height:53.62px;white-space:pre;font-weight:700;color:#1a1a1a;transform:scale(0.25745,0.25);transform-origin:0 0;">출자금 총액</div><div style="position:absolute;left:38.03px;top:605.27px;font-size:53.09px;line-height:53.09px;white-space:pre;font-weight:400;color:#adadad;transform:scale(0.24139,0.25);transform-origin:0 0;">(Total Amount)</div><div style="position:absolute;left:51.67px;top:635.10px;font-size:55.34px;line-height:55.34px;white-space:pre;font-weight:700;color:#1a1a1a;transform:scale(0.24469,0.25);transform-origin:0 0;">출자구분</div><div style="position:absolute;left:62.80px;top:653.39px;font-size:50.55px;line-height:50.55px;white-space:pre;font-weight:400;color:#adadad;transform:scale(0.23083,0.25);transform-origin:0 0;">(Type)</div><div style="position:absolute;left:37.69px;top:683.03px;font-size:57.62px;line-height:57.62px;white-space:pre;font-weight:700;color:#1a1a1a;transform:scale(0.23078,0.25);transform-origin:0 0;">현물출자 내용</div><div style="position:absolute;left:22.94px;top:700.98px;font-size:55.42px;line-height:55.42px;white-space:pre;font-weight:400;color:#adadad;transform:scale(0.22273,0.25);transform-origin:0 0;">(In-Kind Description)</div><div style="position:absolute;left:375.17px;top:540.39px;font-size:50.53px;line-height:50.53px;white-space:pre;font-weight:700;color:#1a1a1a;transform:scale(0.27265,0.25);transform-origin:0 0;">1좌당 금액</div><div style="position:absolute;left:356.93px;top:557.71px;font-size:48.48px;line-height:48.48px;white-space:pre;font-weight:400;color:#adadad;transform:scale(0.26213,0.25);transform-origin:0 0;">(Amount per Unit)</div><div style="position:absolute;left:167.05px;top:540.23px;font-size:46.23px;line-height:46.23px;white-space:pre;font-weight:400;color:#1a1a1a;transform:scale(0.29211,0.25);transform-origin:0 0;">50 좌</div><div style="position:absolute;left:167.01px;top:558.32px;font-size:49.17px;line-height:49.17px;white-space:pre;font-weight:400;color:#adadad;transform:scale(0.25143,0.25);transform-origin:0 0;">50 Units</div><div style="position:absolute;left:167.08px;top:587.76px;font-size:49.79px;line-height:49.79px;white-space:pre;font-weight:400;color:#1a1a1a;transform:scale(0.25717,0.25);transform-origin:0 0;">5,000,000원</div><div style="position:absolute;left:167.27px;top:605.82px;font-size:49.93px;line-height:49.93px;white-space:pre;font-weight:400;color:#adadad;transform:scale(0.24243,0.25);transform-origin:0 0;">KRW 5,000,000</div><div style="position:absolute;left:492.06px;top:540.08px;font-size:48.52px;line-height:48.52px;white-space:pre;font-weight:400;color:#1a1a1a;transform:scale(0.26909,0.25);transform-origin:0 0;">100,000원</div><div style="position:absolute;left:491.86px;top:556.87px;font-size:54.42px;line-height:54.42px;white-space:pre;font-weight:400;color:#adadad;transform:scale(0.21763,0.25);transform-origin:0 0;">KRW 100,000</div><div style="position:absolute;left:167.90px;top:640.58px;font-size:81.67px;line-height:81.67px;white-space:pre;font-weight:400;color:#1a1a1a;transform:scale(0.26531,0.25);transform-origin:0 0;">■</div><div style="position:absolute;left:185.97px;top:643.81px;font-size:50.67px;line-height:50.67px;white-space:pre;font-weight:400;color:#1a1a1a;transform:scale(0.25320,0.25);transform-origin:0 0;">금전출자 (Cash)</div><div style="position:absolute;left:336.80px;top:642.78px;font-size:65.33px;line-height:65.33px;white-space:pre;font-weight:400;color:#1a1a1a;transform:scale(0.24745,0.25);transform-origin:0 0;">□</div><div style="position:absolute;left:352.91px;top:644.11px;font-size:50.67px;line-height:50.67px;white-space:pre;font-weight:400;color:#1a1a1a;transform:scale(0.26630,0.25);transform-origin:0 0;">현물출자 (In-Kind)</div><div style="position:absolute;left:493.00px;top:643.12px;font-size:61.27px;line-height:61.27px;white-space:pre;font-weight:400;color:#1a1a1a;transform:scale(0.26659,0.25);transform-origin:0 0;">□</div><div style="position:absolute;left:508.95px;top:644.16px;font-size:51.75px;line-height:51.75px;white-space:pre;font-weight:400;color:#1a1a1a;transform:scale(0.24781,0.25);transform-origin:0 0;">기타 (ETC) (</div><div style="position:absolute;left:660.24px;top:644.90px;font-size:49.00px;line-height:49.00px;white-space:pre;font-weight:400;color:#1a1a1a;transform:scale(0.19131,0.25);transform-origin:0 0;">)</div><div style="position:absolute;left:167.92px;top:677.88px;font-size:75.00px;line-height:75.00px;white-space:pre;font-weight:400;color:#1a1a1a;transform:scale(0.19444,0.25);transform-origin:0 0;">-</div><div style="position:absolute;left:167.92px;top:700.20px;font-size:60.00px;line-height:60.00px;white-space:pre;font-weight:400;color:#adadad;transform:scale(0.24306,0.25);transform-origin:0 0;">-</div><div style="position:absolute;left:772.29px;top:220.19px;font-size:65.97px;line-height:65.97px;white-space:pre;font-weight:700;color:#ffffff;transform:scale(0.20973,0.25);transform-origin:0 0;-webkit-text-stroke:.014em currentColor;">결재란</div><div style="position:absolute;left:828.29px;top:223.47px;font-size:41.97px;line-height:41.97px;white-space:pre;font-weight:400;color:#111;transform:scale(0.31272,0.25);transform-origin:0 0;">0개</div><div style="position:absolute;left:781.25px;top:270.40px;font-size:77.21px;line-height:77.21px;white-space:pre;font-weight:700;color:#ffffff;transform:scale(0.21812,0.25);transform-origin:0 0;-webkit-text-stroke:.014em currentColor;">엑셀메뉴</div><div style="position:absolute;left:802.65px;top:315.93px;font-size:63.11px;line-height:63.11px;white-space:pre;font-weight:700;color:#3f3f3f;transform:scale(0.21507,0.25);transform-origin:0 0;-webkit-text-stroke:.014em currentColor;">저장하기</div><div style="position:absolute;left:803.37px;top:348.30px;font-size:65.22px;line-height:65.22px;white-space:pre;font-weight:700;color:#3f3f3f;transform:scale(0.20984,0.25);transform-origin:0 0;-webkit-text-stroke:.014em currentColor;">불러오기</div><div style="position:absolute;left:803.30px;top:383.30px;font-size:59.31px;line-height:59.31px;white-space:pre;font-weight:700;color:#3f3f3f;transform:scale(0.22646,0.25);transform-origin:0 0;-webkit-text-stroke:.014em currentColor;">새이름 저장하기</div><div style="position:absolute;left:803.33px;top:418.04px;font-size:66.44px;line-height:66.44px;white-space:pre;font-weight:700;color:#3f3f3f;transform:scale(0.20548,0.25);transform-origin:0 0;-webkit-text-stroke:.014em currentColor;">삭제하기</div><div style="position:absolute;left:802.87px;top:452.31px;font-size:56.36px;line-height:56.36px;white-space:pre;font-weight:700;color:#3f3f3f;transform:scale(0.23630,0.25);transform-origin:0 0;-webkit-text-stroke:.014em currentColor;">새로작성</div><div style="position:absolute;left:801.29px;top:493.16px;font-size:56.96px;line-height:56.96px;white-space:pre;font-weight:700;color:#3f3f3f;transform:scale(0.24292,0.25);transform-origin:0 0;-webkit-text-stroke:.014em currentColor;">미리보기</div><div style="position:absolute;left:802.18px;top:525.66px;font-size:57.85px;line-height:57.85px;white-space:pre;font-weight:700;color:#3f3f3f;transform:scale(0.23668,0.25);transform-origin:0 0;-webkit-text-stroke:.014em currentColor;">출력하기</div><div style="position:absolute;left:802.55px;top:571.06px;font-size:56.55px;line-height:56.55px;white-space:pre;font-weight:700;color:#3f3f3f;transform:scale(0.24160,0.25);transform-origin:0 0;-webkit-text-stroke:.014em currentColor;">파일생성</div><div style="position:absolute;left:112.07px;top:723.39px;font-size:49.30px;line-height:49.30px;white-space:pre;font-weight:400;color:#1b2e1b;transform:scale(0.26965,0.25);transform-origin:0 0;">사용방법</div><div style="position:absolute;left:187.94px;top:723.10px;font-size:45.68px;line-height:45.68px;white-space:pre;font-weight:400;color:#2e6b4b;transform:scale(0.28985,0.25);transform-origin:0 0;">출자증명서</div><div style="position:absolute;left:11.16px;top:749.69px;font-size:52.27px;line-height:52.27px;white-space:pre;font-weight:400;color:#eaf3ee;transform:scale(0.24783,0.25);transform-origin:0 0;">준비</div><div style="position:absolute;left:1032.72px;top:750.24px;font-size:50.29px;line-height:50.29px;white-space:pre;font-weight:400;color:#eaf3ee;transform:scale(0.24450,0.25);transform-origin:0 0;">100%</div>
</body></html>
